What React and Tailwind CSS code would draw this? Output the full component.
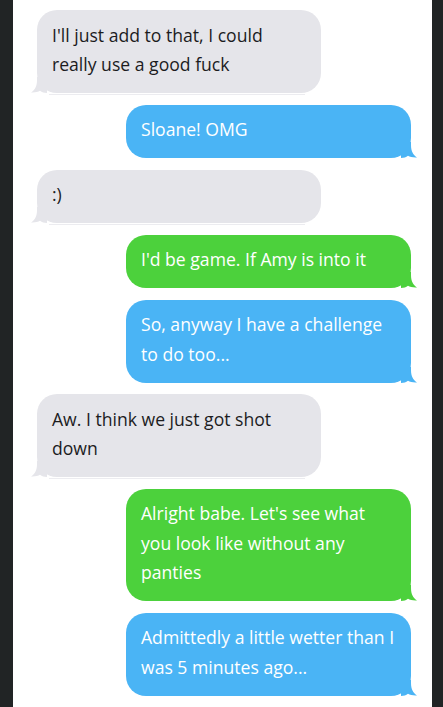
import React from "react";

const COLORS = {
  gray: { bg: "bg-[#e5e5ea]", text: "text-[#1c1c1e]", fill: "#e5e5ea" },
  blue: { bg: "bg-[#4ab4f5]", text: "text-white", fill: "#4ab4f5" },
  green: { bg: "bg-[#4cd13c]", text: "text-white", fill: "#4cd13c" },
};

const messages = [
  { side: "left", color: "gray", lines: ["I'll just add to that, I could", "really use a good fuck"] },
  { side: "right", color: "blue", lines: ["Sloane! OMG"] },
  { side: "left", color: "gray", lines: [":)"] },
  { side: "right", color: "green", lines: ["I'd be game. If Amy is into it"] },
  { side: "right", color: "blue", lines: ["So, anyway I have a challenge", "to do too..."] },
  { side: "left", color: "gray", lines: ["Aw. I think we just got shot", "down"] },
  { side: "right", color: "green", lines: ["Alright babe. Let's see what", "you look like without any", "panties"] },
  { side: "right", color: "blue", lines: ["Admittedly a little wetter than I", "was 5 minutes ago..."] },
];

function Tail({ fill, side }) {
  if (side === "right") {
    return (
      <svg
        className="absolute bottom-0 right-[-6px]"
        width="16"
        height="16"
        viewBox="0 0 16 16"
      >
        <path
          d="M0 0 H10 V3 C10 9 12 13 16 15.5 C12 15.8 9 14.8 7 13.8 C5 15.2 3 16 0 16 Z"
          fill={fill}
        />
      </svg>
    );
  }
  return (
    <svg
      className="absolute bottom-0 left-[-6px]"
      width="16"
      height="16"
      viewBox="0 0 16 16"
    >
      <path
        d="M16 0 H6 V3 C6 9 4 13 0 15.5 C4 15.8 7 14.8 9 13.8 C11 15.2 13 16 16 16 Z"
        fill={fill}
      />
    </svg>
  );
}

function Bubble({ side, color, lines }) {
  const c = COLORS[color];
  const isLeft = side === "left";
  return (
    <div className={`flex ${isLeft ? "justify-start pl-[24px]" : "justify-end pr-[21px]"}`}>
      <div
        className={`relative ${isLeft ? "w-[284px]" : "w-[285px]"} rounded-[20px] ${c.bg} ${c.text} px-[15px] pt-[10.5px] pb-[13.5px] text-[17.6px] leading-[29.5px] whitespace-nowrap`}
      >
        {isLeft && (
          <div className="absolute bottom-[-2px] left-[12px] right-[16px] h-px bg-[#ececf0]" />
        )}
        {lines.map((l, i) => (
          <div key={i} className="relative">
            {l}
          </div>
        ))}
        <Tail fill={c.fill} side={side} />
      </div>
    </div>
  );
}

export default function App() {
  return (
    <div
      className="w-[443px] h-[707px] overflow-hidden bg-[#212425] flex"
      style={{ fontFamily: '"Open Sans", "Noto Sans", sans-serif' }}
    >
      <div className="ml-[13px] w-[419px] h-full bg-white pt-[10px] flex flex-col gap-[11.5px]">
        {messages.map((m, i) => (
          <Bubble key={i} {...m} />
        ))}
      </div>
    </div>
  );
}
